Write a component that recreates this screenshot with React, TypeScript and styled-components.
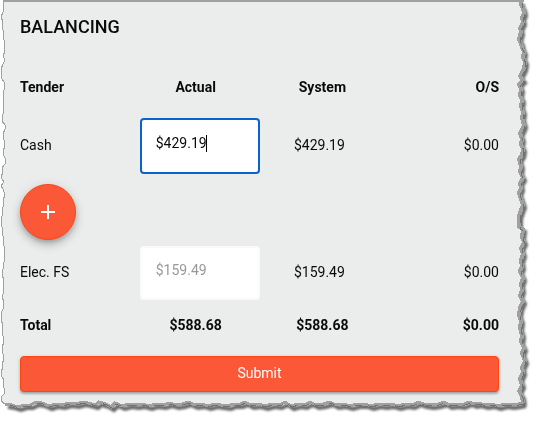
import React, { useState } from "react";
import styled, { createGlobalStyle, css } from "styled-components";

const GlobalStyle = createGlobalStyle`
  *, *::before, *::after { box-sizing: border-box; }
  body {
    margin: 0;
    background: #fff;
    color: #0a0a0a;
    font-family: Roboto, "Liberation Sans", sans-serif;
    font-size: 14px;
    line-height: 20px;
  }
`;

const Paper = styled.main`
  position: relative;
  padding: 16px 38px 29px 20px;
`;

const TornEdges = styled.svg`
  position: absolute;
  inset: 0;
  width: 100%;
  height: 100%;
  overflow: hidden;
  pointer-events: none;
`;

const Form = styled.form`
  position: relative;
`;

const Title = styled.h1`
  margin: 0 0 24px;
  font-size: 18px;
  line-height: 22px;
  font-weight: 500;
`;

const Table = styled.table`
  width: 100%;
  table-layout: fixed;
  border-collapse: collapse;
`;

const Row = styled.tr<{ $height: number }>`
  height: ${(p) => p.$height}px;
`;

type Align = "left" | "center" | "right";

const cell = css<{ $align?: Align; $shift?: "before" | "after" }>`
  padding: 0;
  padding-left: ${(p) => (p.$shift === "before" ? 6 : 0)}px;
  padding-right: ${(p) => (p.$shift === "after" ? 8 : 0)}px;
  text-align: ${(p) => p.$align ?? "left"};
  vertical-align: middle;
`;

const Head = styled.th`
  ${cell}
  font-weight: 700;
`;

const Cell = styled.td`
  ${cell}
`;

const TextCell = styled(Cell)`
  padding-bottom: 2px;
`;

const Label = styled.label`
  display: block;
`;

const Field = styled.div`
  position: relative;
`;

const AmountInput = styled.input<{ $active?: boolean }>`
  display: block;
  width: 100%;
  height: ${(p) => (p.$active ? 56 : 54)}px;
  padding: 0 14px 6px;
  border: 2px solid ${(p) => (p.$active ? "#0864cc" : "#fafafa")};
  border-radius: 4px;
  outline: none;
  background: #fff;
  color: #0a0a0a;
  font: inherit;
  caret-color: transparent;

  &::placeholder {
    color: #999;
    opacity: 1;
  }
`;

const Caret = styled.span`
  position: absolute;
  left: 66px;
  top: 17px;
  width: 1px;
  height: 17px;
  background: #000;
`;

const AddButton = styled.button`
  display: flex;
  align-items: center;
  justify-content: center;
  width: 56px;
  height: 56px;
  padding: 0;
  border: 1px solid #ff4511;
  border-radius: 50%;
  background: #fb5838;
  color: #fff;
  box-shadow: 0 3px 5px -1px rgba(0, 0, 0, 0.2), 0 6px 10px rgba(0, 0, 0, 0.14),
    0 1px 12px rgba(0, 0, 0, 0.1);
`;

const SubmitButton = styled.button`
  display: block;
  width: 100%;
  height: 36px;
  margin-top: 8px;
  padding: 0 0 2px;
  border: 1px solid #ff4511;
  border-radius: 4px;
  background: #fb5838;
  color: #fff;
  font: inherit;
  box-shadow: 0 2px 2px rgba(0, 0, 0, 0.22), 0 1px 4px rgba(0, 0, 0, 0.14);
`;

const LEFT =
  "5,404 1,401 2,396 4,394 4,388 3,384 4,380 2,377 1,371 3,368 2,364 4,359 3,354 2,347 4,342 3,336 2,330 3,325 1,320 1,313 3,309 4,302 2,297 4,291 3,285 4,280 2,275 3,269 3,264 5,260 4,254 5,249 3,243 4,239 2,233 2,227 1,222 2,216 2,210 4,204 3,200 5,195 3,189 1,186 4,182 1,177 3,172 2,168 5,164 6,160 4,156 3,151 5,146 4,140 3,134 5,129 5,125 2,121 3,114 4,108 3,103 4,98 3,93 5,87 4,82 2,79 1,74 1,69 3,64 5,60 3,56 5,51 4,47 5,42 3,38 4,32 2,28 3,22 1,17 3,12 4,7 3,1";
const RIGHT =
  "521,1 521,5 523,8 524,13 522,18 523,22 520,28 521,32 519,39 521,43 522,48 524,52 523,57 525,62 524,68 522,72 520,76 523,80 519,84 521,89 520,95 522,100 521,106 523,112 522,118 524,125 522,130 520,133 522,139 521,144 523,149 522,155 519,159 521,166 520,172 523,178 520,183 521,188 519,193 521,199 523,205 521,210 519,216 519,227 523,229 522,237 524,242 521,248 523,254 521,260 522,267 520,271 523,278 521,284 522,290 520,296 523,301 520,308 519,315 521,321 520,328 522,335 521,342 524,348 522,353 525,361 522,367 523,372 520,379 522,385 519,391 522,396 523,403";
const BOTTOM =
  "523,403 518,404 511,405 505,404 498,406 492,404 485,405 479,403 474,404 469,402 462,405 456,404 449,405 444,402 438,404 431,405 424,404 418,402 412,405 405,404 398,406 391,404 384,405 378,404 371,406 365,404 357,404 350,406 343,404 336,405 330,402 323,404 316,405 310,402 304,405 298,404 291,406 285,402 279,405 272,404 265,406 258,404 251,405 245,402 240,404 233,404 228,406 221,405 215,404 208,406 202,404 195,405 188,402 182,404 176,405 169,403 163,405 155,404 149,406 142,404 136,405 129,404 122,406 115,403 111,407 106,404 99,402 95,405 88,403 83,402 76,404 69,403 62,405 55,404 49,406 42,403 36,402 30,405 24,405 18,407 12,405 5,404";

function TornBackdrop() {
  return (
    <TornEdges viewBox="0 0 537 421" preserveAspectRatio="none" aria-hidden="true">
      <defs>
        <filter id="soft" x="-5%" y="-5%" width="110%" height="110%">
          <feGaussianBlur stdDeviation="1.3" />
        </filter>
      </defs>
      <g fill="none" stroke="#666" strokeWidth="4" filter="url(#soft)">
        <polyline points={RIGHT} transform="translate(2 3)" />
        <polyline points={BOTTOM} transform="translate(3 3)" />
      </g>
      <polygon points={`${RIGHT} ${BOTTOM} ${LEFT}`} fill="#ebeded" />
      <g fill="none" stroke="#a0a0a0" shapeRendering="crispEdges">
        <polyline points={LEFT} strokeWidth="1" />
        <path d="M3 1H524" strokeWidth="2" />
        <polyline points={RIGHT} strokeWidth="4" />
        <polyline points={BOTTOM} strokeWidth="3" />
      </g>
      <g fill="none" stroke="#707070" shapeRendering="crispEdges">
        <polyline points={RIGHT} strokeWidth="1" strokeDasharray="5 7 8 4" transform="translate(1 2)" />
        <polyline points={BOTTOM} strokeWidth="1" strokeDasharray="7 5 10 6" transform="translate(1 1)" />
      </g>
    </TornEdges>
  );
}

export default function App() {
  const [cash, setCash] = useState("$429.19");
  const [elec, setElec] = useState("");

  return (
    <>
      <GlobalStyle />
      <Paper>
        <TornBackdrop />
        <Form onSubmit={(e) => e.preventDefault()}>
          <Title>BALANCING</Title>
          <Table>
            <thead>
              <Row $height={50}>
                <Head scope="col">Tender</Head>
                <Head scope="col" $align="center" $shift="after">Actual</Head>
                <Head scope="col" $align="center" $shift="before">System</Head>
                <Head scope="col" $align="right">O/S</Head>
              </Row>
            </thead>
            <tbody>
              <Row $height={68}>
                <TextCell><Label htmlFor="cash">Cash</Label></TextCell>
                <Cell>
                  <Field>
                    <AmountInput
                      id="cash"
                      $active
                      value={cash}
                      onChange={(e) => setCash(e.target.value)}
                    />
                    <Caret />
                  </Field>
                </Cell>
                <TextCell $align="center">$429.19</TextCell>
                <TextCell $align="right">$0.00</TextCell>
              </Row>
              <Row $height={64}>
                <Cell colSpan={4}>
                  <AddButton type="button" aria-label="Add tender">
                    <svg width="16" height="16" viewBox="0 0 16 16" aria-hidden="true">
                      <path d="M8 1V15M1 8H15" stroke="currentColor" strokeWidth="2" />
                    </svg>
                  </AddButton>
                </Cell>
              </Row>
              <Row $height={58}>
                <TextCell><Label htmlFor="elec">Elec. FS</Label></TextCell>
                <Cell>
                  <AmountInput
                    id="elec"
                    placeholder="$159.49"
                    value={elec}
                    onChange={(e) => setElec(e.target.value)}
                  />
                </Cell>
                <TextCell $align="center">$159.49</TextCell>
                <TextCell $align="right">$0.00</TextCell>
              </Row>
            </tbody>
            <tfoot>
              <Row $height={46}>
                <Head scope="row">Total</Head>
                <Head as="td" $align="center" $shift="after">$588.68</Head>
                <Head as="td" $align="center" $shift="before">$588.68</Head>
                <Head as="td" $align="right">$0.00</Head>
              </Row>
            </tfoot>
          </Table>
          <SubmitButton type="submit">Submit</SubmitButton>
        </Form>
      </Paper>
    </>
  );
}
